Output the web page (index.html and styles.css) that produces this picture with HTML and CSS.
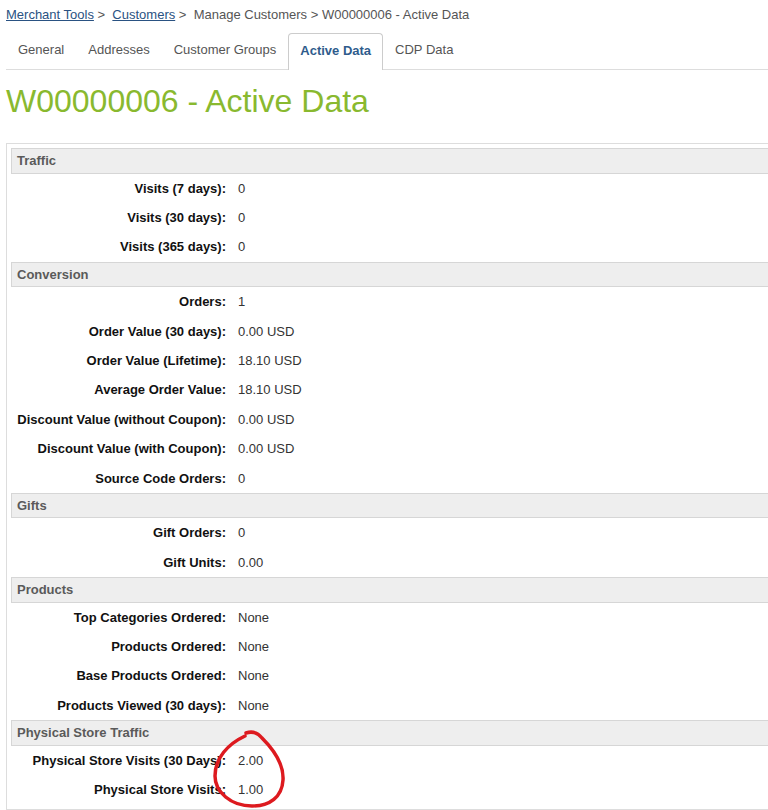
FILE: index.html
```html
<!DOCTYPE html>
<html lang="en">
<head>
    <meta charset="UTF-8">
    <meta name="viewport" content="width=device-width, initial-scale=1.0">
    <title>W00000006 - Active Data</title>
    <link rel="stylesheet" href="styles.css">
</head>
<body>
    <div class="page">
        <div class="breadcrumb">
            <a href="#">Merchant Tools</a>&nbsp;&gt;&nbsp; <a href="#">Customers</a>&nbsp;&gt;&nbsp; Manage Customers &gt; W00000006 - Active Data
        </div>

        <ul class="tabs">
            <li class="tab">General</li>
            <li class="tab">Addresses</li>
            <li class="tab">Customer Groups</li>
            <li class="tab active">Active Data</li>
            <li class="tab">CDP Data</li>
        </ul>

        <h1 class="page-title">W00000006 - Active Data</h1>

        <div class="panel">
            <!-- Traffic -->
            <div class="section">
                <div class="section-head">Traffic</div>
                <dl class="rows">
                    <dt>Visits (7 days):</dt><dd>0</dd>
                    <dt>Visits (30 days):</dt><dd>0</dd>
                    <dt>Visits (365 days):</dt><dd>0</dd>
                </dl>
            </div>

            <!-- Conversion -->
            <div class="section">
                <div class="section-head">Conversion</div>
                <dl class="rows">
                    <dt>Orders:</dt><dd>1</dd>
                    <dt>Order Value (30 days):</dt><dd>0.00 USD</dd>
                    <dt>Order Value (Lifetime):</dt><dd>18.10 USD</dd>
                    <dt>Average Order Value:</dt><dd>18.10 USD</dd>
                    <dt>Discount Value (without Coupon):</dt><dd>0.00 USD</dd>
                    <dt>Discount Value (with Coupon):</dt><dd>0.00 USD</dd>
                    <dt>Source Code Orders:</dt><dd>0</dd>
                </dl>
            </div>

            <!-- Gifts -->
            <div class="section">
                <div class="section-head">Gifts</div>
                <dl class="rows">
                    <dt>Gift Orders:</dt><dd>0</dd>
                    <dt>Gift Units:</dt><dd>0.00</dd>
                </dl>
            </div>

            <!-- Products -->
            <div class="section">
                <div class="section-head">Products</div>
                <dl class="rows">
                    <dt>Top Categories Ordered:</dt><dd>None</dd>
                    <dt>Products Ordered:</dt><dd>None</dd>
                    <dt>Base Products Ordered:</dt><dd>None</dd>
                    <dt>Products Viewed (30 days):</dt><dd>None</dd>
                </dl>
            </div>

            <!-- Physical Store Traffic -->
            <div class="section">
                <div class="section-head">Physical Store Traffic</div>
                <dl class="rows">
                    <dt>Physical Store Visits (30 Days):</dt><dd>2.00</dd>
                    <dt>Physical Store Visits:</dt><dd>1.00</dd>
                </dl>
            </div>
        </div>

        <!-- hand-drawn marker around the store visit values -->
        <svg class="annotation" width="80" height="84" viewBox="210 728 80 84">
            <path d="M 246 733 C 252 731, 258 733, 262 738 C 274 750, 284 764, 283 780 C 282 797, 270 806, 252 806 C 231 806, 215 792, 215 776 C 215 758, 228 744, 245 736"
                  fill="none" stroke="#dd1a1f" stroke-width="3.5" stroke-linecap="round" stroke-linejoin="round"/>
        </svg>
    </div>
</body>
</html>
```

FILE: styles.css
```css
:root {
    --text: #555;
    --link: #2a5282;
    --border: #ddd;
    --head-bg: #eee;
    --green: #89b92f;
}

html {
    overflow: hidden;
}

body {
    margin: 0;
    font-family: "Liberation Sans", Arial, sans-serif;
    font-size: 13px;
    color: var(--text);
    background: white;
}

.page {
    position: relative;
    padding: 7px 0 0 6px;
}

.breadcrumb {
    line-height: 16px;
    white-space: nowrap;
}

.breadcrumb a {
    color: var(--link);
    text-decoration: underline;
}

.tabs {
    display: flex;
    list-style: none;
    margin: 10px 0 0;
    padding: 0;
    border-bottom: 1px solid var(--border);
}

.tab {
    padding: 8px 11px 11px;
    line-height: 16px;
    border: 1px solid transparent;
    border-bottom: none;
    border-radius: 4px 4px 0 0;
    margin-bottom: -1px;
    white-space: nowrap;
}

.tab.active {
    border-color: #ccc;
    background: white;
    color: #2f5c8c;
    font-weight: bold;
    padding-top: 9px;
    padding-bottom: 11px;
}

.page-title {
    margin: 13px 0 24px;
    font-size: 32px;
    line-height: 36px;
    font-weight: normal;
    color: var(--green);
    white-space: nowrap;
}

.panel {
    border: 1px solid var(--border);
    border-right: none;
    padding: 4px 0 4px 4px;
}

.section-head {
    box-sizing: border-box;
    height: 25.5px;
    line-height: 23.5px;
    padding-left: 5px;
    background: var(--head-bg);
    border: 1px solid #d6d6d6;
    border-right: none;
    font-weight: bold;
    color: #5a5a5a;
}

.rows {
    display: grid;
    grid-template-columns: 215px 1fr;
    margin: 0;
}

.rows dt,
.rows dd {
    margin: 0;
    height: 29.4px;
    line-height: 29.4px;
    white-space: nowrap;
}

.rows dt {
    text-align: right;
    font-weight: bold;
    color: #111;
}

.rows dd {
    padding-left: 12px;
    color: #333;
}

.annotation {
    position: absolute;
    left: 210px;
    top: 728px;
    pointer-events: none;
}
```
